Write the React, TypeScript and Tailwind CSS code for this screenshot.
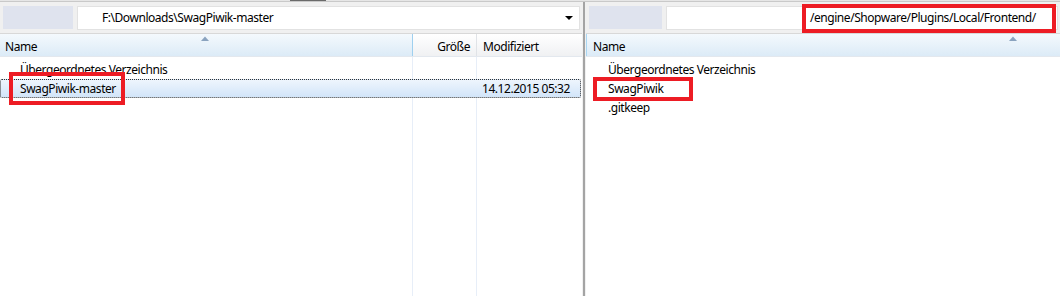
import React from "react";

const font = { fontFamily: '"Noto Sans", "Open Sans", sans-serif', letterSpacing: "-0.45px" };

function SortArrow() {
  return (
    <svg width="8" height="5" viewBox="0 0 8 5" className="block">
      <path d="M0 5 L4 0.5 L8 5 Z" fill="#8aa3bf" />
    </svg>
  );
}

function Toolbar({ boxW, path, textPad, dropdown }: { boxW: number; path: string; textPad: string; dropdown?: boolean }) {
  return (
    <div className="h-[31px] bg-[#f0f0f0] flex items-center pl-[3px] pr-[2px] gap-[4px]">
      <div className="h-[23px] bg-[#dfe3ee]" style={{ width: boxW }} />
      <div className={`flex-1 h-[24px] bg-white border border-[#e2e2e2] flex items-center ${textPad} pr-[6px]`}>
        <span className="flex-1 text-[12px] text-black whitespace-nowrap pt-[1px]">{path}</span>
        {dropdown && (
          <svg width="8" height="4" viewBox="0 0 8 4" className="block">
            <path d="M0 0 L8 0 L4 4 Z" fill="#000" />
          </svg>
        )}
      </div>
    </div>
  );
}

export default function App() {
  return (
    <div className="w-[1060px] h-[296px] bg-white flex flex-col overflow-hidden relative text-black" style={font}>
      {/* top strip */}
      <div className="h-[2px] bg-[#e6e6e6] border-b border-[#c9c9c9] flex shrink-0">
        <div className="ml-[290px] w-[36px] h-[1px] bg-[#6a6a6a]" />
      </div>
      <div className="flex flex-1 min-h-0">
        {/* left pane */}
        <div className="w-[582px] flex flex-col shrink-0">
          <Toolbar boxW={70} path="F:\Downloads\SwagPiwik-master" textPad="pl-[24px]" dropdown />
          <div className="h-[24px] flex border-t border-[#d8d8d8] border-b border-b-[#e3e8ee] text-[12px]">
            <div className="w-[413px] bg-gradient-to-b from-[#f4f9fd] to-[#dcebf7] border-r border-[#9fd0ef] relative flex items-center pl-[5px] pt-[3px]">
              <span>Name</span>
              <div className="absolute left-[201px] top-[2px]"><SortArrow /></div>
            </div>
            <div className="w-[64px] bg-gradient-to-b from-[#ffffff] to-[#f0f1f3] border-r border-[#e0e3e7] flex items-center justify-end pr-[6px] pt-[3px]">
              <span>Größe</span>
            </div>
            <div className="flex-1 bg-gradient-to-b from-[#ffffff] to-[#f0f1f3] flex items-center pl-[6px] pt-[3px]">
              <span>Modifiziert</span>
            </div>
          </div>
          <div className="flex-1 relative pt-[3px] text-[12px]">
            <div className="absolute left-[412px] top-0 bottom-0 w-[1px] bg-[#e7eef8]" />
            <div className="absolute left-[476px] top-0 bottom-0 w-[1px] bg-[#e7eef8]" />
            <div className="h-[19px] flex items-center pl-[20px] relative">Übergeordnetes Verzeichnis</div>
            <div className="h-[19px] mr-[1px] flex items-center relative rounded-[2px] border border-dotted border-[#333] bg-gradient-to-b from-[#eef5fd] to-[#d2e5f9]">
              <span className="pl-[19px] w-[480px]">SwagPiwik-master</span>
              <span className="pl-[1px]">14.12.2015 05:32</span>
            </div>
          </div>
        </div>
        {/* splitter */}
        <div className="w-[4px] flex shrink-0">
          <div className="w-[1px] bg-[#f0f0f0]" />
          <div className="w-[2px] bg-[#a4a4a4]" />
          <div className="w-[1px] bg-[#f0f0f0]" />
        </div>
        {/* right pane */}
        <div className="flex-1 flex flex-col min-w-0">
          <Toolbar boxW={73} path="/engine/Shopware/Plugins/Local/Frontend/" textPad="pl-[143px]" />
          <div className="h-[24px] flex border-t border-[#d8d8d8] border-b border-b-[#e3e8ee] text-[12px]">
            <div className="flex-1 bg-gradient-to-b from-[#f4f9fd] to-[#dcebf7] border-l border-[#a9d6f2] relative flex items-center pl-[6px] pt-[3px]">
              <span>Name</span>
              <div className="absolute left-[422px] top-[2px]"><SortArrow /></div>
            </div>
          </div>
          <div className="flex-1 pt-[3px] text-[12px]">
            <div className="h-[19px] flex items-center pl-[22px]">Übergeordnetes Verzeichnis</div>
            <div className="h-[19px] flex items-center pl-[22px]">SwagPiwik</div>
            <div className="h-[19px] flex items-center pl-[22px]">.gitkeep</div>
          </div>
        </div>
      </div>
      {/* red annotation boxes */}
      <div className="absolute left-[9px] top-[72px] w-[116px] h-[33px] border-[4px] border-[#ed1c24]" />
      <div className="absolute left-[593px] top-[77px] w-[100px] h-[24px] border-[4px] border-[#ed1c24]" />
      <div className="absolute left-[802px] top-[4px] w-[254px] h-[29px] border-[4px] border-[#ed1c24]" />
    </div>
  );
}
